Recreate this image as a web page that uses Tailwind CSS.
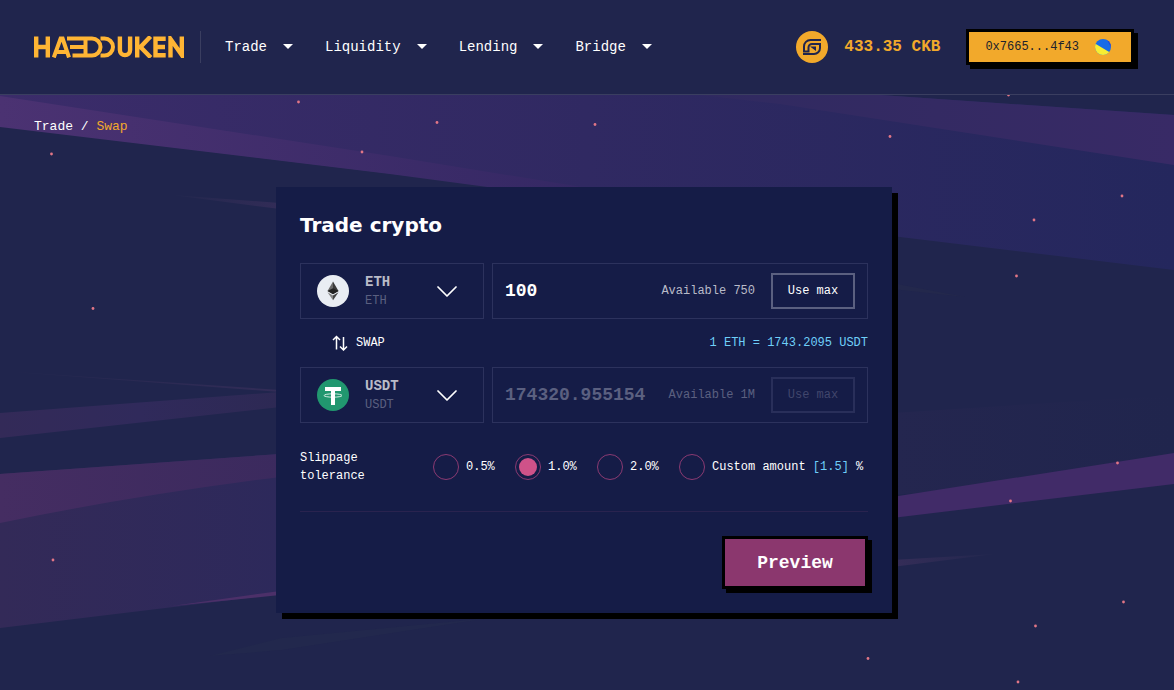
<!DOCTYPE html>
<html lang="en">
<head>
<meta charset="utf-8">
<meta name="viewport" content="width=device-width, initial-scale=1">
<title>Haddouken – Swap</title>
<script src="https://cdn.jsdelivr.net/npm/@tailwindcss/browser@4"></script>
</head>
<body class="flex min-h-screen flex-col bg-[#20254d] font-['Liberation_Mono',monospace] text-xs text-white">

<header class="flex min-h-[95px] items-center border-b border-[#3a3e60] bg-[#20254d] pr-10 pb-px pl-[34px]">
  <a href="#" aria-label="Haddouken home" class="shrink-0">
    <svg class="block h-[22px] w-[150px]" viewBox="0 0 150 22" fill="none" stroke="#ffb534" stroke-width="4.400">
      <path d="M2.200 .5v21M13.800 .5v21M2.200 11h12"/>
      <path d="M19.800 21.500L26.600 2.500h2L35 21.500M23 16h9" stroke-width="4"/>
      <path d="M33 2.500h25a8.500 8.500 0 0 1 0 17H38.500M36 11h17M51.500 3v17" stroke-width="4"/>
      <path d="M66.500 2.500h4a8.500 8.500 0 0 1 0 17h-4" stroke-width="4"/>
      <path d="M85.900 .5v13.500a5.100 5.100 0 0 0 10.200 0V.5M103.200 .5v21M116.500 .5l-10 10.500L116.800 21.500M131.700 2.700h-10.200v16.600h10.200M121 11h10M136.500 21.500V3l11.300 16V.5"/>
    </svg>
  </a>
  <span class="ml-4 h-8 w-px shrink-0 bg-[#3a3e60]"></span>
  <nav class="ml-6 flex items-center gap-8 text-sm" aria-label="Main">
    <a href="#" class="flex items-center gap-4">Trade
      <svg class="h-[5px] w-[10px]" viewBox="0 0 10 5" fill="#fff"><path d="M0 0h10L5 5z"/></svg></a>
    <a href="#" class="flex items-center gap-4">Liquidity
      <svg class="h-[5px] w-[10px]" viewBox="0 0 10 5" fill="#fff"><path d="M0 0h10L5 5z"/></svg></a>
    <a href="#" class="flex items-center gap-4">Lending
      <svg class="h-[5px] w-[10px]" viewBox="0 0 10 5" fill="#fff"><path d="M0 0h10L5 5z"/></svg></a>
    <a href="#" class="flex items-center gap-4">Bridge
      <svg class="h-[5px] w-[10px]" viewBox="0 0 10 5" fill="#fff"><path d="M0 0h10L5 5z"/></svg></a>
  </nav>
  <div class="ml-auto flex shrink-0 items-center">
    <svg class="h-8 w-8" viewBox="0 0 32 32" fill="none">
      <circle cx="16" cy="16" r="16" fill="#f2a92b"/>
      <path d="M25 9H14.500A6.500 6.500 0 0 0 8 15.500V20.500h4.500v-4a3.500 3.500 0 0 1 3.500-3.500H24v4a6 6 0 0 1-6 6H7" stroke="#20254d" stroke-width="2"/>
      <path d="M14 15.500h6v4.500z" fill="#20254d"/>
    </svg>
    <span class="ml-4 text-base font-bold text-[#f2a92b]">433.35 CKB</span>
    <button type="button" class="ml-[26px] flex h-9 items-center gap-4 border-[3px] border-black bg-[#f2a92b] pr-5 pl-4 text-[#20222c] shadow-[4px_4px_0_#000]">
      0x7665...4f43
      <svg class="h-4 w-4" viewBox="0 0 16 16">
        <defs><clipPath id="avatar"><circle cx="8" cy="8" r="8"/></clipPath></defs>
        <g clip-path="url(#avatar)"><path fill="#176be8" d="M0 0h16v16H0z"/><path fill="#f8ee32" d="M-1 4L15 13.500L11 18H-2z"/><path fill="#2742d8" d="M11.500 0H16v8z"/></g>
      </svg>
    </button>
  </div>
</header>

<main class="relative flex-1 overflow-hidden pt-6 pr-10 pb-[77px] pl-[34px]">
  <svg class="absolute inset-0 h-full w-full" viewBox="0 95 1174 595" preserveAspectRatio="xMidYMid slice" aria-hidden="true">
    <defs>
      <linearGradient id="beam"><stop offset="0" stop-color="#3b2c6a"/><stop offset=".5" stop-color="#302962"/><stop offset="1" stop-color="#24275d"/></linearGradient>
      <linearGradient id="edge"><stop offset="0" stop-color="#4b3272"/><stop offset="1" stop-color="#342864"/></linearGradient>
      <linearGradient id="edge2"><stop offset="0" stop-color="#302a60"/><stop offset="1" stop-color="#382a66"/></linearGradient>
      <linearGradient id="low"><stop offset="0" stop-color="#332a58"/><stop offset="1" stop-color="#2d295b"/></linearGradient>
      <linearGradient id="lowedge"><stop offset="0" stop-color="#452d62"/><stop offset="1" stop-color="#3b2a5e"/></linearGradient>
      <linearGradient id="band"><stop offset="0" stop-color="#332a58"/><stop offset=".5" stop-color="#302a5b"/><stop offset="1" stop-color="#2d2954"/></linearGradient>
      <linearGradient id="haze"><stop offset="0" stop-color="#24264f"/><stop offset="1" stop-color="#20254d"/></linearGradient>
      <linearGradient id="wisp"><stop offset="0" stop-color="#22274e"/><stop offset="1" stop-color="#322c57"/></linearGradient>
      <linearGradient id="wisp2"><stop offset="0" stop-color="#352d58"/><stop offset="1" stop-color="#22274e"/></linearGradient>
    </defs>
    <path fill="url(#beam)" d="M0 95H880L1174 115V270L892 236L500 187L0 126z"/>
    <path fill="url(#edge)" d="M0 96L390 156L600 190H510L390 174L0 127z"/>
    <path fill="url(#edge2)" d="M700 95H880L1174 115V165L780 104z"/>
    <path fill="url(#wisp)" d="M172 195L280 203V209z"/>
    <path fill="url(#wisp)" d="M0 371L280 390V392z"/>
    <path fill="url(#band)" d="M0 413L280 392V407L0 438z"/>
    <path fill="url(#low)" d="M0 474L280 454V594L0 628z"/>
    <path fill="url(#lowedge)" d="M0 474L280 454V477Q130 496 0 523z"/>
    <path fill="#4c3069" d="M172 606L280 591V595z"/>
    <path fill="url(#haze)" d="M892 413L1174 395V470L892 495z"/>
    <path fill="#23284c" d="M892 283L965 297L892 289z"/>
    <path fill="#412b68" d="M892 497L1174 453V484L892 518z"/>
    <path fill="url(#wisp2)" d="M892 560L995 554L892 567z"/>
    <path fill="#22284d" d="M210 656L282 638L490 618L282 650z"/>
    <g fill="#e27686">
      <circle cx="298.500" cy="102" r="1.400"/><circle cx="51.500" cy="154" r="1.400"/><circle cx="362" cy="152" r="1.400"/>
      <circle cx="437" cy="122.500" r="1.400"/><circle cx="595" cy="124.500" r="1.400"/><circle cx="890" cy="136.500" r="1.400"/>
      <circle cx="1008.500" cy="95" r="1.400"/><circle cx="1122" cy="196" r="1.400"/><circle cx="1034" cy="220" r="1.400"/>
      <circle cx="1016.500" cy="276" r="1.400"/><circle cx="93" cy="308.500" r="1.400"/><circle cx="53" cy="560" r="1.400"/>
      <circle cx="1117.500" cy="463" r="1.400"/><circle cx="1010.500" cy="501" r="1.400"/><circle cx="1123.500" cy="602" r="1.400"/>
      <circle cx="1035.500" cy="626" r="1.400"/><circle cx="868" cy="658.500" r="1.400"/><circle cx="1018" cy="682" r="1.400"/>
    </g>
  </svg>

  <nav class="relative text-[13px] leading-4" aria-label="Breadcrumb">
    <a href="#">Trade</a> / <a href="#" class="text-[#f2a92b]" aria-current="page">Swap</a>
  </nav>

  <form class="relative mx-auto mt-[52px] max-w-[616px] bg-[#151c47] px-6 pt-6 pb-6 shadow-[6px_6px_0_#000]">
    <h1 class="font-['DejaVu_Sans',sans-serif] text-xl leading-7 font-bold">Trade crypto</h1>

    <div class="mt-6 flex gap-2">
      <button type="button" class="flex h-14 w-[184px] shrink-0 items-center border border-[#2c325d] px-4 text-left">
        <svg class="h-8 w-8" viewBox="0 0 32 32">
          <circle cx="16" cy="16" r="16" fill="#e9edf3"/>
          <path fill="#6a6a6a" d="M16 6.500v12.500L10.500 16z"/><path fill="#3a3a3a" d="M16 6.500v12.500L21.500 16z"/>
          <path fill="#222" d="M16 13.300l5.500 2.700-5.500 3.200-5.500-3.200z"/>
          <path fill="#858585" d="M10.500 17.300L16 20.500v4.800z"/><path fill="#444" d="M21.500 17.300L16 20.500v4.800z"/>
        </svg>
        <span class="ml-4 flex flex-1 flex-col"><span class="text-sm font-bold text-[#b9bbc8]">ETH</span><span class="leading-[18px] text-[#5b6080]">ETH</span></span>
        <svg class="mr-[10px] h-[11px] w-5" viewBox="0 0 20 11" fill="none" stroke="#fff" stroke-width="1.700" stroke-linecap="round" stroke-linejoin="round"><path d="M1 1l9 9 9-9"/></svg>
      </button>
      <div class="flex h-14 min-w-0 flex-1 items-center border border-[#2c325d] px-3">
        <input aria-label="ETH amount" value="100" class="w-36 min-w-0 flex-1 bg-transparent text-lg font-bold text-white outline-none">
        <span class="shrink-0 text-[#b9bbc8]">Available 750</span>
        <button type="button" class="ml-4 h-9 w-[84px] shrink-0 border-2 border-[#5b6080]">Use max</button>
      </div>
    </div>

    <div class="flex h-12 items-center justify-between">
      <button type="button" class="ml-8 flex items-center gap-2">
        <svg class="h-4 w-4" viewBox="0 0 16 16" fill="none" stroke="#fff" stroke-width="1.500"><path d="M4.500 14.500V1.500M1 5l3.500-3.500L8 5M11.500 2V15M8 11.500l3.500 3.500L15 11.500"/></svg>
        SWAP
      </button>
      <span class="text-[#6fcff9]">1 ETH = 1743.2095 USDT</span>
    </div>

    <div class="flex gap-2">
      <button type="button" class="flex h-14 w-[184px] shrink-0 items-center border border-[#2c325d] px-4 text-left">
        <svg class="h-8 w-8" viewBox="0 0 32 32">
          <circle cx="16" cy="16" r="16" fill="#21976f"/>
          <path fill="#fff" d="M8 8h16v4h-6v14h-4V12H8z"/>
          <ellipse cx="16" cy="16.500" rx="9" ry="1.700" fill="none" stroke="#fff" stroke-width=".8"/>
        </svg>
        <span class="ml-4 flex flex-1 flex-col"><span class="text-sm font-bold text-[#b9bbc8]">USDT</span><span class="leading-[18px] text-[#5b6080]">USDT</span></span>
        <svg class="mr-[10px] h-[11px] w-5" viewBox="0 0 20 11" fill="none" stroke="#fff" stroke-width="1.700" stroke-linecap="round" stroke-linejoin="round"><path d="M1 1l9 9 9-9"/></svg>
      </button>
      <div class="flex h-14 min-w-0 flex-1 items-center border border-[#2c325d] px-3">
        <input aria-label="USDT amount" value="174320.955154" disabled class="w-36 min-w-0 flex-1 bg-transparent text-lg font-bold text-[#5b6080] outline-none">
        <span class="shrink-0 text-[#5b6080]">Available 1M</span>
        <button type="button" disabled class="ml-4 h-9 w-[84px] shrink-0 border-2 border-[#292f5a] text-[#41466c]">Use max</button>
      </div>
    </div>

    <fieldset class="mt-[26px] flex items-center border-b border-[#29234f] pb-[26px]" aria-labelledby="slippage">
      <span id="slippage" class="w-[133px] shrink-0 leading-[18px]">Slippage<br>tolerance</span>
      <label class="flex w-[82px] items-center gap-[7px]"><input type="radio" name="slippage" class="size-[26px] appearance-none rounded-full border border-[#8b3a72] bg-clip-content p-[3px] checked:bg-[#cf5289]">0.5%</label>
      <label class="flex w-[82px] items-center gap-[7px]"><input type="radio" name="slippage" checked class="size-[26px] appearance-none rounded-full border border-[#8b3a72] bg-clip-content p-[3px] checked:bg-[#cf5289]">1.0%</label>
      <label class="flex w-[82px] items-center gap-[7px]"><input type="radio" name="slippage" class="size-[26px] appearance-none rounded-full border border-[#8b3a72] bg-clip-content p-[3px] checked:bg-[#cf5289]">2.0%</label>
      <label class="flex items-center gap-[7px]"><input type="radio" name="slippage" class="size-[26px] appearance-none rounded-full border border-[#8b3a72] bg-clip-content p-[3px] checked:bg-[#cf5289]"><span>Custom amount <span class="text-[#6fcff9]">[1.5]</span> %</span></label>
    </fieldset>

    <div class="mt-6 flex justify-end">
      <button type="submit" class="h-[53px] w-[146px] border-[3px] border-black bg-[#8b376e] text-lg font-bold shadow-[4px_4px_0_#000]">Preview</button>
    </div>
  </form>
</main>
</body>
</html>
